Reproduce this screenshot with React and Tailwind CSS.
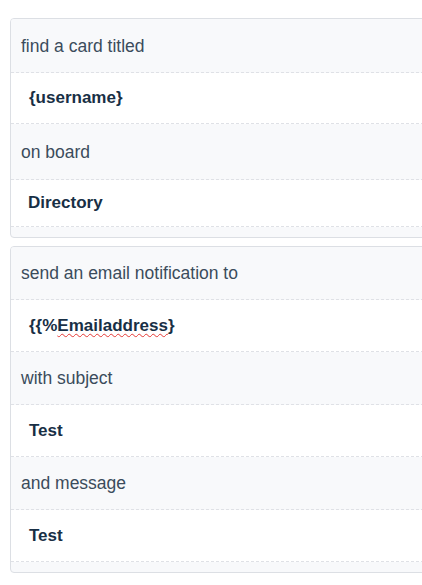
import React from "react";

function Row({ kind, h, children }) {
  const base =
    "flex items-center border-b border-dashed border-[#dfe1e6] leading-[20px]";
  if (kind === "label") {
    return (
      <div className={`${base} bg-[#f8f9fb] pl-[10px] text-[17.5px] text-[#3b4c5c]`} style={{ height: h }}>
        {children}
      </div>
    );
  }
  return (
    <div className={`${base} bg-white pl-[17px] text-[17px] font-bold text-[#182f45]`} style={{ height: h }}>
      {children}
    </div>
  );
}

function Card({ children }) {
  return (
    <div className="w-[520px] overflow-hidden rounded-[4px] border border-[#dcdfe4] bg-[#f8f9fb]">
      {children}
      <div className="h-[10px]" />
    </div>
  );
}

export default function App() {
  return (
    <div
      className="h-[585px] w-[422px] overflow-hidden bg-white pl-[10px] pt-[18px]"
      style={{ fontFamily: '"Liberation Sans", Arial, sans-serif' }}
    >
      <div className="flex flex-col gap-[8px]">
        <Card>
          <Row kind="label" h={54}>find a card titled</Row>
          <Row kind="value" h={51}><span className="pl-[1px]">{"{username}"}</span></Row>
          <Row kind="label" h={56}>on board</Row>
          <Row kind="value" h={47}>Directory</Row>
        </Card>
        <Card>
          <Row kind="label" h={53}>send an email notification to</Row>
          <Row kind="value" h={52}>
            <span className="pl-[1px]">
              {"{{%"}
              <span className="underline decoration-wavy decoration-[#e53935] decoration-1 underline-offset-[2px]">
                Emailaddress
              </span>
              {"}"}
            </span>
          </Row>
          <Row kind="label" h={53}>with subject</Row>
          <Row kind="value" h={52}><span className="pl-[1px]">Test</span></Row>
          <Row kind="label" h={53}>and message</Row>
          <Row kind="value" h={52}><span className="pl-[1px]">Test</span></Row>
        </Card>
      </div>
    </div>
  );
}
